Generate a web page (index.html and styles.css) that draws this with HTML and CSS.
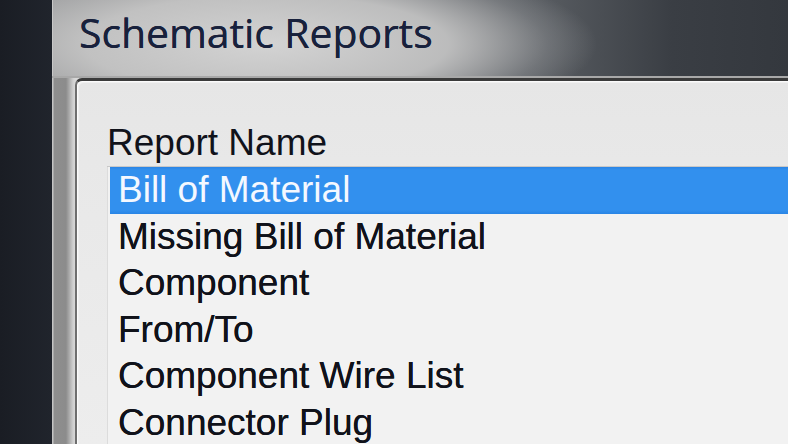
FILE: index.html
```html
<!DOCTYPE html>
<html>
<head>
<meta charset="utf-8">
<link rel="stylesheet" href="styles.css">
</head>
<body>
<div class="screen">
  <div class="desk"></div>
  <div class="window">
    <div class="titlebar">
      <span class="title">Schematic Reports</span>
    </div>
    <div class="frame">
      <div class="panel">
        <div class="list">
          <div class="header">Report Name</div>
          <div class="rows">
            <div class="row selected">Bill of Material</div>
            <div class="row">Missing Bill of Material</div>
            <div class="row">Component</div>
            <div class="row">From/To</div>
            <div class="row">Component Wire List</div>
            <div class="row">Connector Plug</div>
          </div>
        </div>
      </div>
    </div>
  </div>
</div>
</body>
</html>
```
FILE: styles.css
```css
html, body {
  margin: 0;
  padding: 0;
  width: 788px;
  height: 444px;
  overflow: hidden;
  background: #1c2028;
}
.screen {
  display: flex;
  width: 788px;
  height: 444px;
}
.desk {
  width: 52px;
  flex: none;
  background: linear-gradient(90deg, #1a1d24, #20242c);
}
.window {
  flex: 1;
  display: flex;
  flex-direction: column;
  background: #2f3338;
}
.titlebar {
  height: 78px;
  flex: none;
  box-sizing: border-box;
  padding-left: 27px;
  padding-top: 4px;
  background:
    radial-gradient(ellipse 330px 88px at 215px 44px, rgba(212,212,212,0.98) 0%, rgba(196,196,196,0.9) 55%, rgba(150,152,155,0.4) 85%, rgba(100,100,100,0) 100%),
    linear-gradient(90deg, #aaaaaa 0px, #9e9e9e 200px, #5a5e63 480px, #3a3e44 620px, #34383e 736px),
    linear-gradient(180deg, #4a4e54 0%, #2e3237 90%);
  box-shadow: inset 0 -2px 0 #a8a8a8, inset 1px 0 0 #c8c8c8;
}
.title {
  font-family: "Open Sans", "Noto Sans", sans-serif;
  font-size: 41px;
  line-height: 56px;
  color: #18213c;
  letter-spacing: -0.1px;
  text-shadow: 0 0 0.5px #18213c;
}
.frame {
  flex: 1;
  display: flex;
  padding-left: 23px;
  background: linear-gradient(90deg, #c4c4c4 0px, #c4c4c4 1px, #8e8e8e 2px, #8c8c8c 14px, #a8a8a8 17px, #cfcfcf 21px, #d8d8d8 23px);
}
.panel {
  flex: 1;
  box-sizing: border-box;
  border-top: 3px solid #3a3a3a;
  border-left: 2px solid #6e6e6e;
  border-top-left-radius: 7px;
  background: linear-gradient(180deg, #e6e6e6 0px, #e8e8e8 80px, #ededed 100%);
  box-shadow: inset 1px 1px 0 #fbfbfb, inset 2px 2px 0 #f0f0f0;
  padding-top: 39px;
  padding-left: 30px;
}
.list {
  display: flex;
  flex-direction: column;
  height: 100%;
  font-family: "Liberation Sans", Arial, sans-serif;
  font-size: 37px;
  color: #10121a;
}
.header {
  line-height: 46px;
  border-bottom: 1px solid #c8c8c8;
}
.rows {
  flex: 1;
  border-left: 1px solid #dcdcdc;
  background: #f2f2f2;
}
.row {
  line-height: 46.5px;
  padding-left: 8px;
  margin-left: 2px;
  white-space: nowrap;
  text-shadow: 0 0 0.4px #10121a;
}
.selected {
  background: linear-gradient(180deg, #2a84e4 0px, #3290ee 3px, #3290ee 43px, #2a86e6 46.5px);
  color: #f4f8ff;
  text-shadow: none;
}
```
